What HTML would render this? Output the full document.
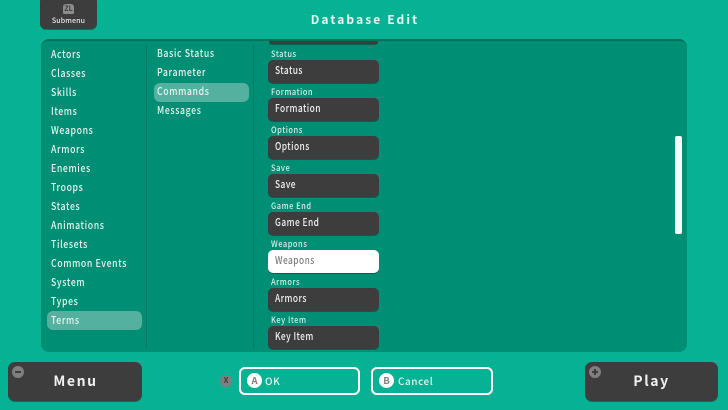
<!DOCTYPE html>
<html><head><meta charset="utf-8">
<style>
html,body{margin:0;padding:0;width:728px;height:410px;overflow:hidden;background:#07b294}
body{position:relative;font-family:"Noto Sans CJK JP","Liberation Sans",sans-serif;color:#e8f5f0}
div{position:absolute;box-sizing:border-box;white-space:nowrap}
.panel{left:41px;top:39px;width:646px;height:313px;background:#008e74;border-radius:8px;border-top:2px solid #00705c;overflow:hidden}
.dv{top:46px;width:1px;height:303px;background:#007c66}
.it{font-size:10.5px;line-height:14px;letter-spacing:.75px;font-weight:500;transform:scaleX(.83);transform-origin:left center}
.sel{background:#55b19f;border-radius:6px}
.lb{left:271px;font-size:8.5px;line-height:10px;letter-spacing:.6px;color:#d5efe8;font-weight:500;transform:scaleX(.88);transform-origin:left center}
.bt{left:268px;width:111px;height:23px;background:#3d3d3d;border-radius:5px;box-shadow:0 1px 0 #00614f;font-size:10.5px;line-height:22px;padding-left:7px;letter-spacing:.55px;color:#f0f0f0;font-weight:500}
.bt span{display:inline-block;transform:scaleX(.8);transform-origin:left center}
.big{top:362px;height:39px;width:134px;background:#3d3d3d;border-radius:7px;box-shadow:0 1px 0 #04765f;color:#f2f2f2;font-size:14px;font-weight:700;line-height:39px;text-align:center;letter-spacing:1.6px}
.rd{border-radius:50%;background:#7f7f7f;color:#3d3d3d;text-align:center;font-weight:700}
.ob{top:367px;height:28px;border:2px solid #fff;border-radius:6px;font-size:10px;line-height:23px;letter-spacing:.55px;color:#e4f5f0;font-weight:500}
.ci{left:6px;top:4px;width:15px;height:15px;border-radius:50%;background:#fff;color:#808080;font-size:9.5px;line-height:15px;text-align:center;font-weight:700;letter-spacing:0}
</style></head><body>

<div style="left:40px;top:-4px;width:57px;height:33px;background:#3d3d3d;border-radius:6px;box-shadow:0 1px 0 #04765f"></div>
<div style="left:63px;top:4px;width:11px;height:10px;background:#8c8c8c;border-radius:3px 3px 1px 1px;color:#3d3d3d;font-size:7px;line-height:10px;text-align:center;font-weight:700">ZL</div>
<div style="left:40px;top:15px;width:57px;text-align:center;font-size:7px;line-height:12px;letter-spacing:.15px;color:#e6e6e6;font-weight:500">Submenu</div>

<div style="left:1px;top:11px;width:728px;text-align:center;font-size:12px;line-height:18px;font-weight:700;letter-spacing:2.1px;color:#e8f7f3">Database Edit</div>

<div class="panel"></div>
<div class="dv" style="left:146px"></div>
<div class="dv" style="left:253px"></div>

<div class="sel" style="left:47px;top:311px;width:95px;height:19px"></div>
<div class="sel" style="left:154px;top:83px;width:95px;height:19px"></div>

<div class="it" style="left:51px;top:48px">Actors</div>
<div class="it" style="left:51px;top:67px">Classes</div>
<div class="it" style="left:51px;top:86px">Skills</div>
<div class="it" style="left:51px;top:105px">Items</div>
<div class="it" style="left:51px;top:124px">Weapons</div>
<div class="it" style="left:51px;top:143px">Armors</div>
<div class="it" style="left:51px;top:162px">Enemies</div>
<div class="it" style="left:51px;top:181px">Troops</div>
<div class="it" style="left:51px;top:200px">States</div>
<div class="it" style="left:51px;top:219px">Animations</div>
<div class="it" style="left:51px;top:238px">Tilesets</div>
<div class="it" style="left:51px;top:257px">Common Events</div>
<div class="it" style="left:51px;top:276px">System</div>
<div class="it" style="left:51px;top:295px">Types</div>
<div class="it" style="left:51px;top:314px">Terms</div>

<div class="it" style="left:157px;top:47px">Basic Status</div>
<div class="it" style="left:157px;top:66px">Parameter</div>
<div class="it" style="left:157px;top:85px">Commands</div>
<div class="it" style="left:157px;top:104px">Messages</div>

<div class="bt" style="top:41px;height:3px;border-radius:0 0 5px 5px;width:109px;left:269px"></div>

<div class="lb" style="top:49px">Status</div><div class="bt" style="top:60px"><span>Status</span></div>
<div class="lb" style="top:87px">Formation</div><div class="bt" style="top:98px"><span>Formation</span></div>
<div class="lb" style="top:125px">Options</div><div class="bt" style="top:136px"><span>Options</span></div>
<div class="lb" style="top:163px">Save</div><div class="bt" style="top:174px"><span>Save</span></div>
<div class="lb" style="top:201px">Game End</div><div class="bt" style="top:212px"><span>Game End</span></div>
<div class="lb" style="top:239px">Weapons</div><div class="bt" style="top:250px;background:#fff;color:#808080"><span>Weapons</span></div>
<div class="lb" style="top:277px">Armors</div><div class="bt" style="top:288px"><span>Armors</span></div>
<div class="lb" style="top:315px">Key Item</div><div class="bt" style="top:326px"><span>Key Item</span></div>

<div style="left:675px;top:136px;width:7px;height:98px;background:#f4fbf9;border-radius:2px"></div>

<div class="big" style="left:8px;padding-left:1px">Menu</div>
<div class="rd" style="left:12px;top:366px;width:12px;height:12px"></div>
<div style="left:15px;top:371px;width:6px;height:2px;background:#3d3d3d"></div>

<div class="big" style="left:585px;width:133px">Play</div>
<div class="rd" style="left:589px;top:366px;width:12px;height:12px"></div>
<div style="left:592px;top:371px;width:6px;height:2px;background:#3d3d3d"></div>
<div style="left:594px;top:369px;width:2px;height:6px;background:#3d3d3d"></div>

<div class="rd" style="left:220px;top:375px;width:12px;height:12px;font-size:8px;line-height:12px">X</div>

<div class="ob" style="left:239px;width:121px;padding-left:24px"><div class="ci">A</div>OK</div>
<div class="ob" style="left:371px;width:122px;padding-left:25px"><div class="ci">B</div>Cancel</div>

</body></html>
